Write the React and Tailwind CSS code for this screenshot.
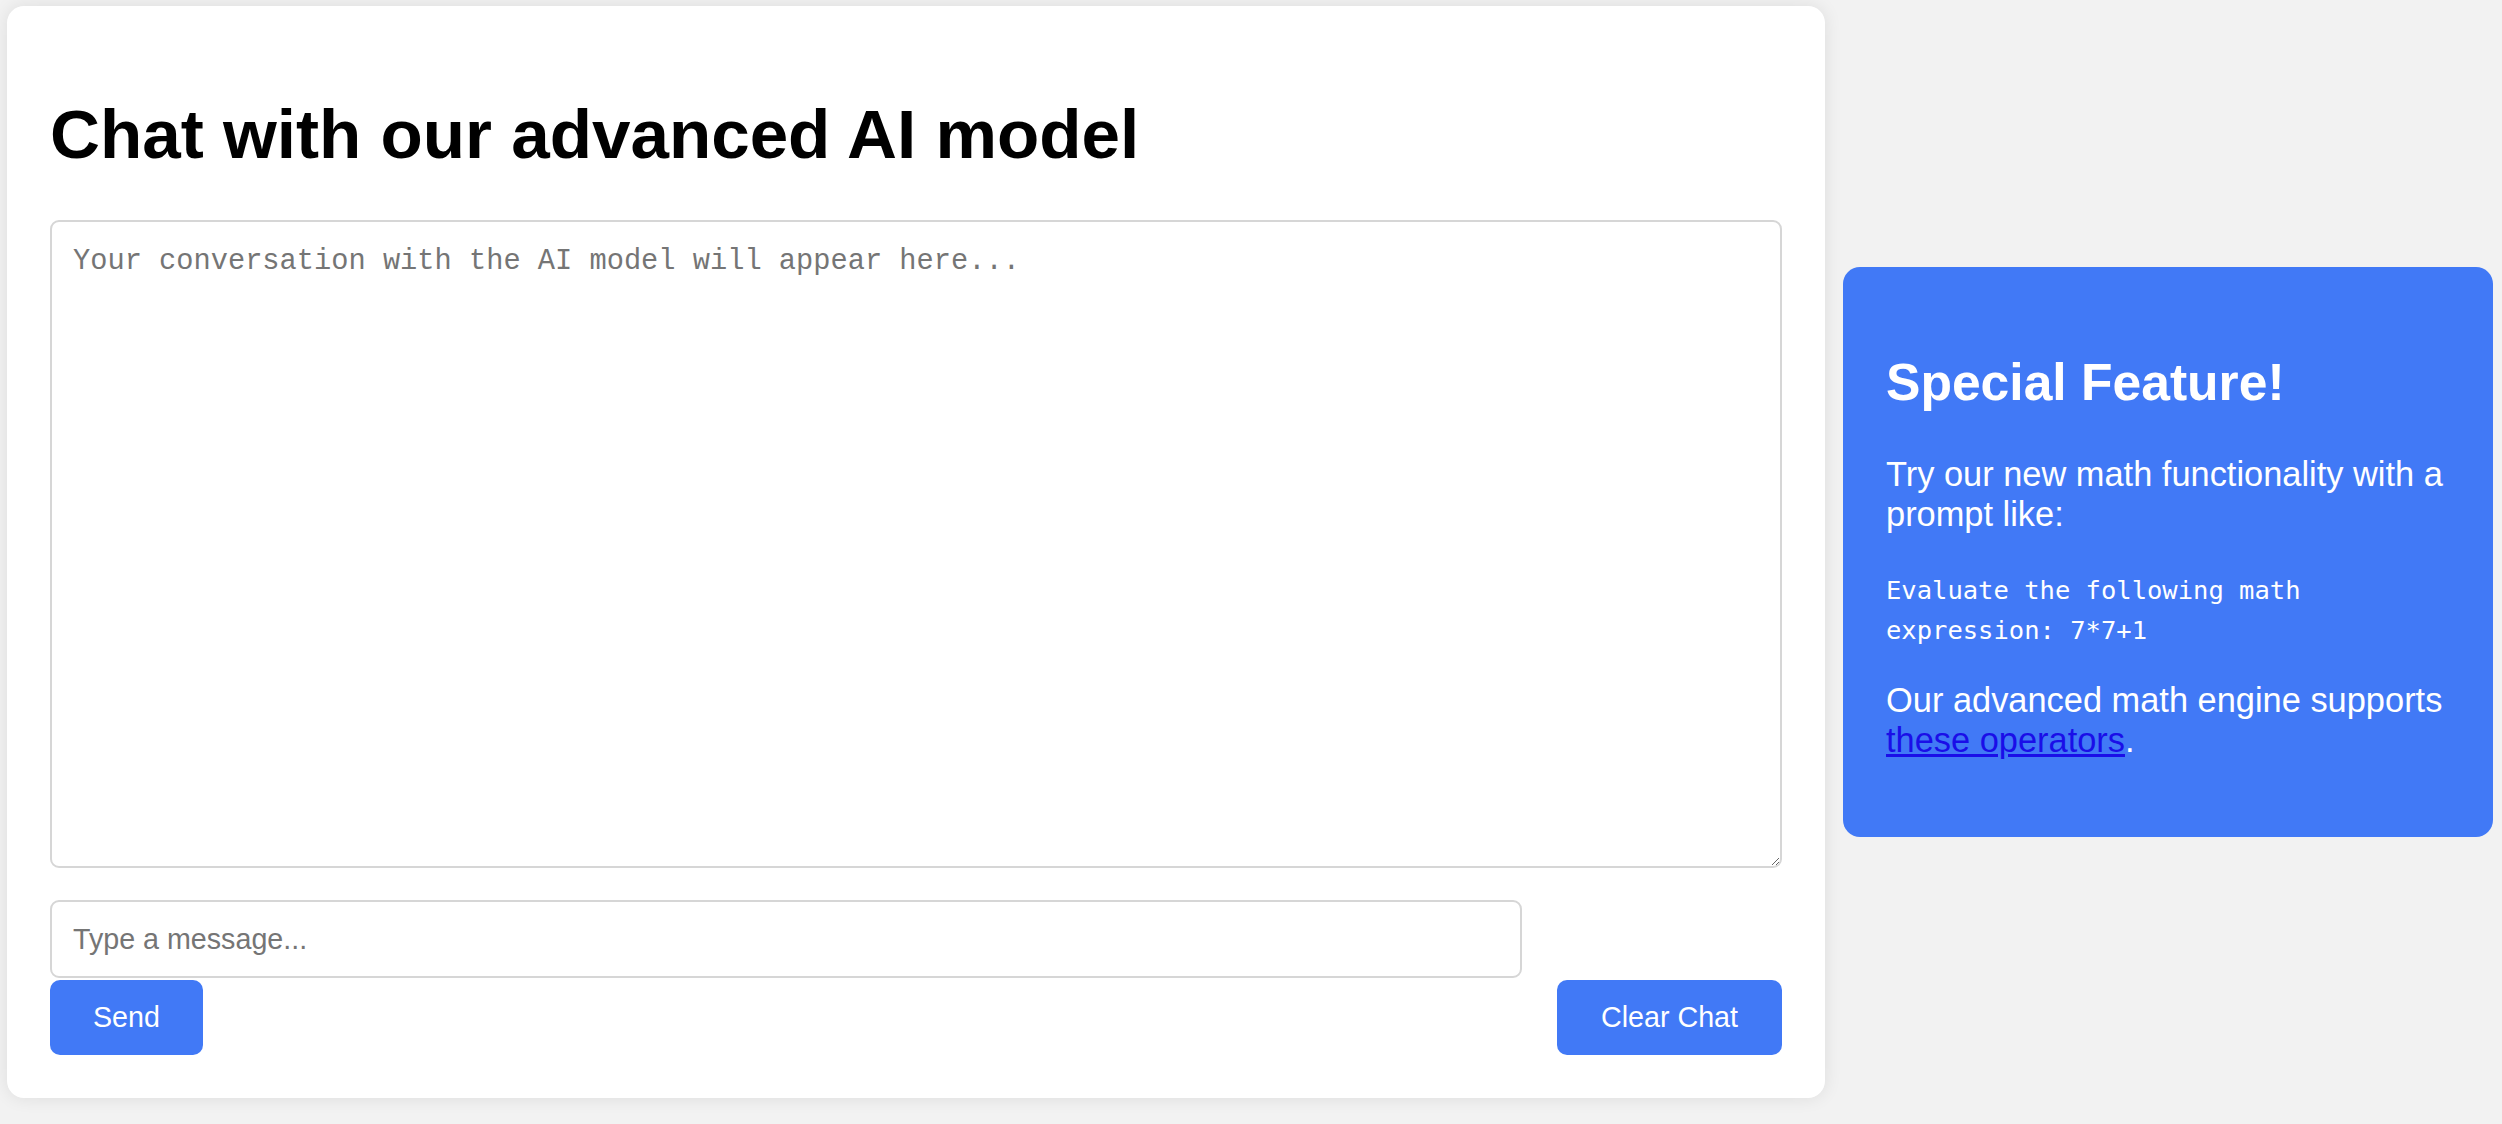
import React from 'react';

// Pagina chat con pannello laterale "Special Feature"
function ChatCard() {
  return (
    <div className="flex-1 bg-white rounded-[17px] shadow-[0_0_18px_rgba(0,0,0,0.09)] px-[43px] py-[43px]">
      <h1 className="mt-[46px] mb-[46px] text-[69.2px] leading-[79px] font-bold text-black">
        Chat with our advanced AI model
      </h1>
      <textarea
        className="block w-full h-[648px] border-2 border-[#d6d6d6] rounded-[9px] px-[21px] pt-[24px] pb-[21px] font-['Liberation_Mono',monospace] text-[28.7px] leading-[32.5px] text-black placeholder:text-[#757575] outline-none"
        placeholder="Your conversation with the AI model will appear here..."
        readOnly
      />
      <input
        type="text"
        className="block mt-[32px] w-[85%] h-[78px] border-2 border-[#d6d6d6] rounded-[9px] px-[21px] font-['Liberation_Sans',Arial,sans-serif] text-[28.67px] text-black placeholder:text-[#757575] outline-none"
        placeholder="Type a message..."
      />
      <div className="flex justify-between mt-[2px]">
        <button className="h-[75px] px-[43px] rounded-[10px] bg-[#4179f6] text-white text-[28.67px] font-['Liberation_Sans',Arial,sans-serif]">
          Send
        </button>
        <button className="h-[75px] px-[44px] rounded-[10px] bg-[#4179f6] text-white text-[28.67px] font-['Liberation_Sans',Arial,sans-serif]">
          Clear Chat
        </button>
      </div>
    </div>
  );
}

function FeaturePanel() {
  return (
    <div className="w-[650px] shrink-0 bg-[#4179f6] rounded-[17px] px-[43px] py-[43px] text-white">
      <h2 className="mt-[43px] mb-[43px] text-[51.6px] leading-[59px] font-bold">Special Feature!</h2>
      <p className="text-[34.4px] leading-[39.5px] mb-[34px]">
        Try our new math functionality with a prompt like:
      </p>
      <p className="text-[34.4px] leading-[39.5px] mb-[34px]">
        <code className="font-['DejaVu_Sans_Mono',monospace] text-[25.5px] leading-none">
          Evaluate the following math expression: 7*7+1
        </code>
      </p>
      <p className="text-[34.4px] leading-[39.5px] mb-[34px]">
        Our advanced math engine supports{' '}
        <a href="#" className="text-[#1a0ee8] underline">these operators</a>.
      </p>
    </div>
  );
}

export default function App() {
  return (
    <div className="min-h-screen bg-[#f2f2f2] font-['Liberation_Sans',Arial,sans-serif]">
      <div className="flex items-center gap-[18px] pt-[6px] pl-[7px] pr-[9px]">
        <ChatCard />
        <FeaturePanel />
      </div>
    </div>
  );
}
